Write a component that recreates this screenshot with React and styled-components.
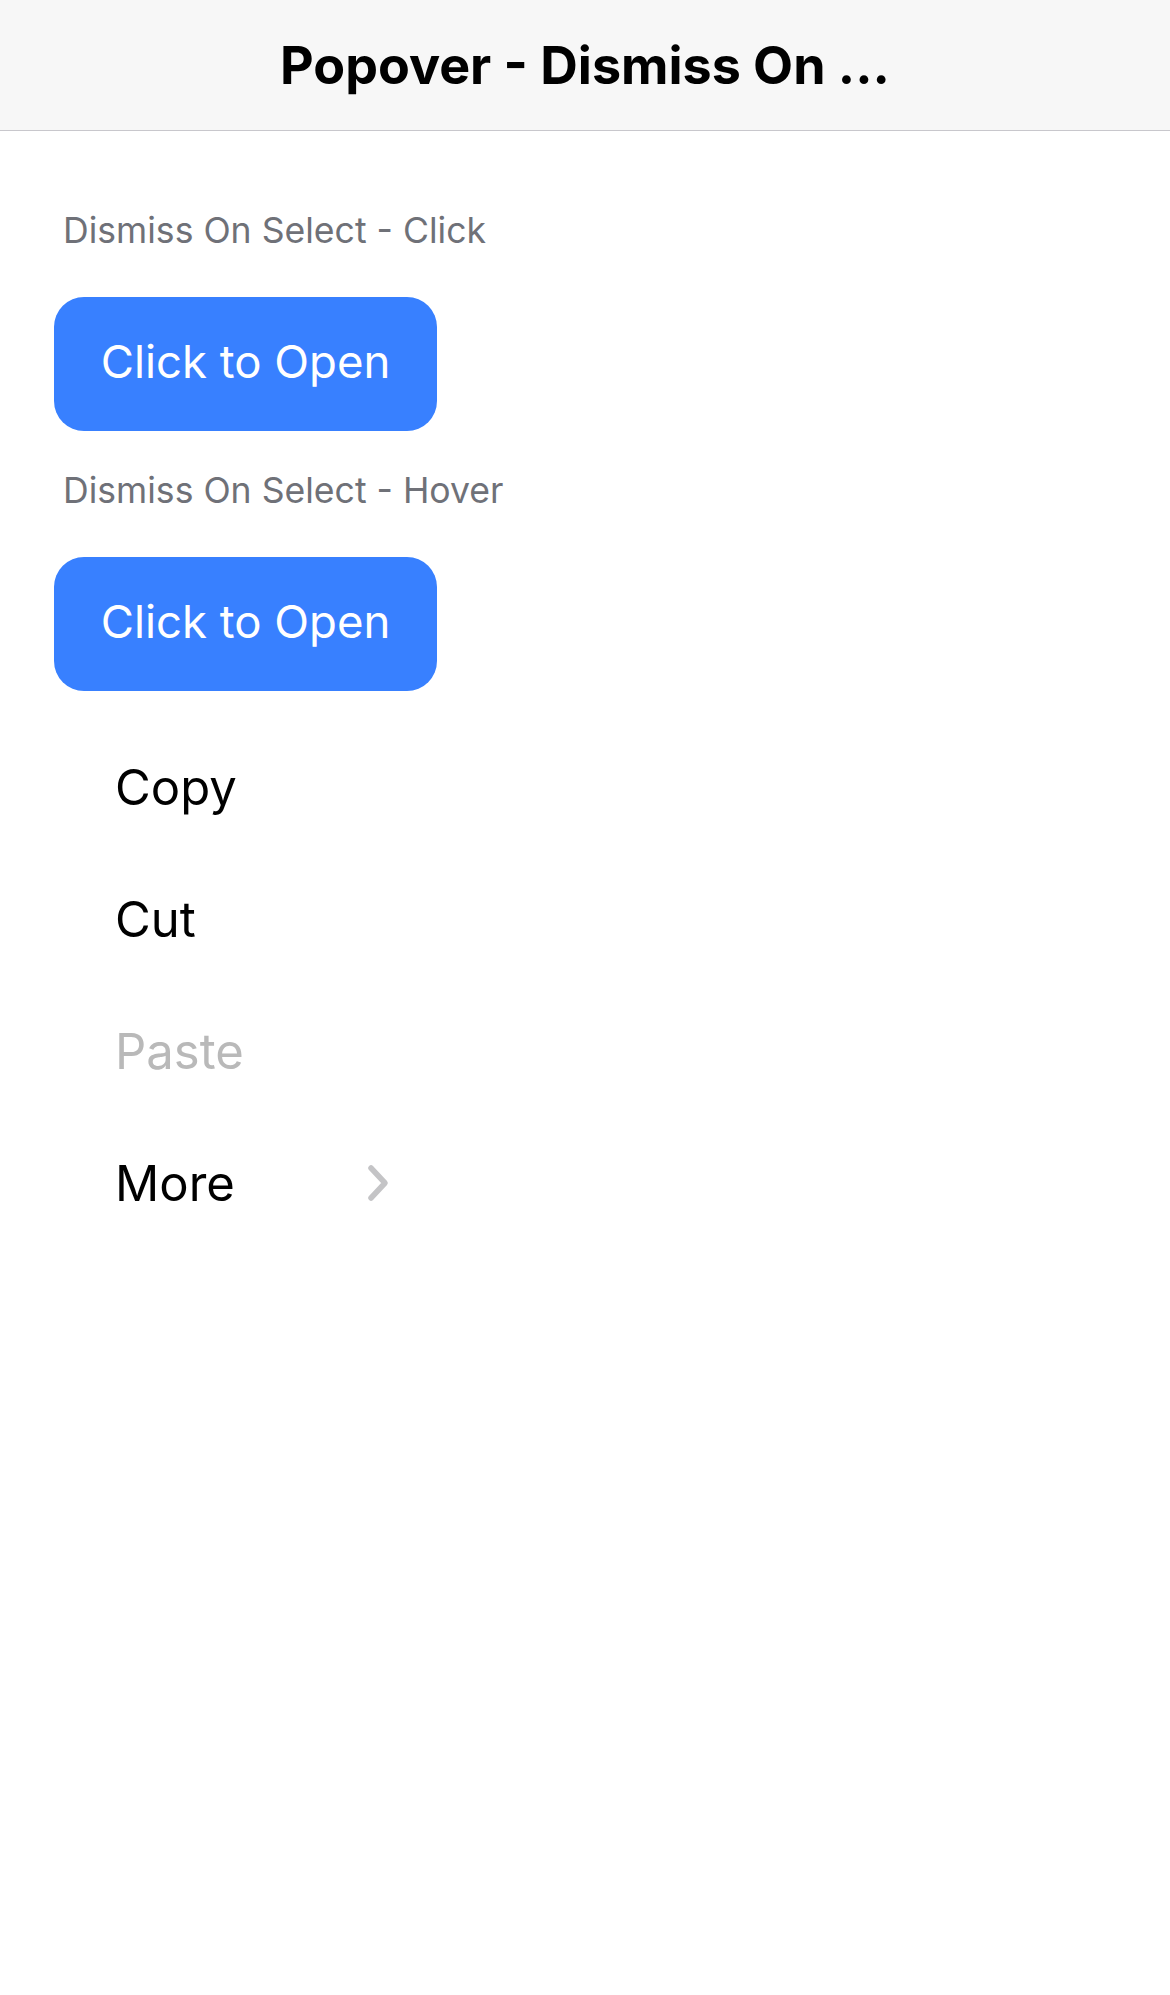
import React from 'react';
import styled, { createGlobalStyle } from 'styled-components';

const Global = createGlobalStyle`
  html, body {
    margin: 0;
    padding: 0;
    background: #ffffff;
    font-family: Inter, "Noto Sans", "Liberation Sans", sans-serif;
  }
`;

const Page = styled.div`
  width: 1170px;
  min-height: 1995px;
  background: #ffffff;
`;

const Header = styled.header`
  height: 130px;
  background: #f7f7f7;
  border-bottom: 1px solid #c8c7cc;
  display: flex;
  align-items: center;
  justify-content: center;
`;

const Title = styled.h1`
  margin: 0;
  font-size: 52px;
  font-weight: 700;
  color: #000000;
  letter-spacing: 0;
`;

const Content = styled.main`
  padding: 78px 0 0 54px;
  display: flex;
  flex-direction: column;
  align-items: flex-start;
`;

const Label = styled.div`
  margin-left: 9px;
  font-size: 35.6px;
  line-height: 44px;
  color: #6f7178;
  margin-top: ${p => p.$top || 0}px;
`;

const OpenButton = styled.button`
  margin-top: 44px;
  width: 383px;
  height: 134px;
  border: none;
  border-radius: 30px;
  background: #3880ff;
  color: #ffffff;
  font-family: inherit;
  font-size: 45.5px;
  display: flex;
  align-items: center;
  justify-content: center;
  padding: 0 0 5px 0;
  box-sizing: border-box;
`;

const Menu = styled.ul`
  list-style: none;
  margin: 30px 0 0 0;
  padding: 0;
  width: 383px;
`;

const Item = styled.li`
  height: 132px;
  display: flex;
  align-items: center;
  justify-content: space-between;
  padding: 0 48px 0 61px;
  box-sizing: border-box;
  font-size: 49px;
  color: ${p => (p.$disabled ? '#b9b9b9' : '#000000')};
`;

const Chevron = () => (
  <svg width="22" height="38" viewBox="0 0 22 38">
    <polyline
      points="4,4 18,19 4,34"
      fill="none"
      stroke="#c4c4c6"
      strokeWidth="5.5"
      strokeLinecap="round"
      strokeLinejoin="round"
    />
  </svg>
);

export default function App() {
  return (
    <Page>
      <Global />
      <Header>
        <Title>Popover - Dismiss On ...</Title>
      </Header>
      <Content>
        <Label>Dismiss On Select - Click</Label>
        <OpenButton>Click to Open</OpenButton>
        <Label $top={38}>Dismiss On Select - Hover</Label>
        <OpenButton>Click to Open</OpenButton>
        <Menu>
          <Item>Copy</Item>
          <Item>Cut</Item>
          <Item $disabled>Paste</Item>
          <Item>
            More
            <Chevron />
          </Item>
        </Menu>
      </Content>
    </Page>
  );
}
